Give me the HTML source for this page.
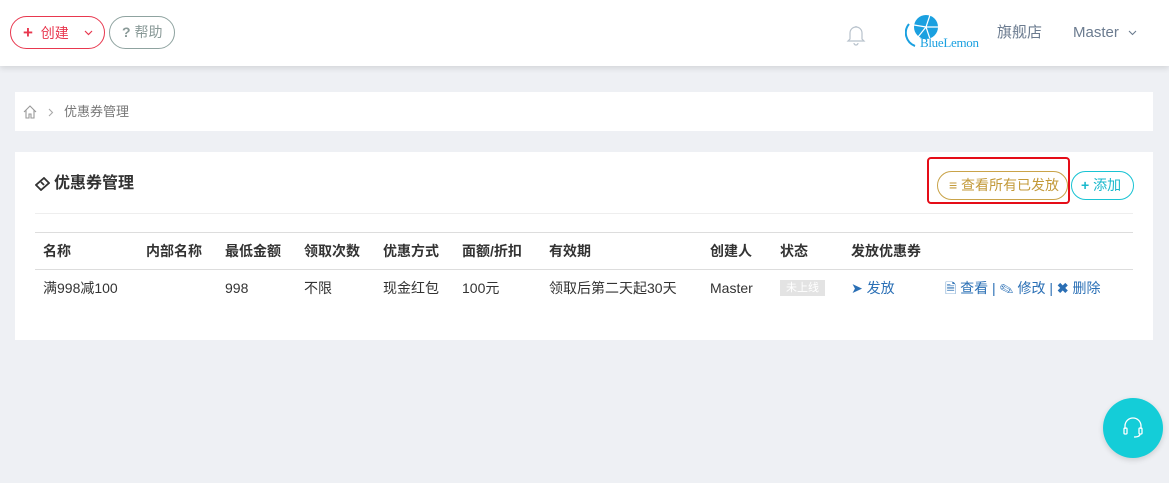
<!DOCTYPE html>
<html><head><meta charset="utf-8"><style>
*{margin:0;padding:0;box-sizing:border-box}
body{width:1169px;height:483px;background:#eef0f4;font-family:"Liberation Sans","Noto Sans CJK SC",sans-serif;font-size:14px;color:#333;position:relative;overflow:hidden}
.hdr{position:absolute;left:0;top:0;width:1169px;height:66px;background:#fff;box-shadow:0 2px 6px rgba(0,0,0,.12)}
.btn{position:absolute;border-radius:17px;height:33px;line-height:31px;font-size:14px}
.abs{position:absolute;white-space:nowrap;line-height:20px}
.box{position:absolute;left:15px;width:1138px;background:#fff}
.blue{color:#2a6fb5}
</style></head><body>
<div class="hdr">
 <div class="btn" style="left:10px;top:16px;width:95px;border:1px solid #e8384f;color:#e8384f;padding-left:12px"><b style="font-size:17px">+</b>&nbsp; 创建
  <svg style="position:absolute;left:73px;top:13px" width="9" height="6" viewBox="0 0 9 6" fill="none" stroke="#e8384f" stroke-width="1.2"><path d="M1 1l3.5 3.5L8 1"/></svg></div>
 <div class="btn" style="left:109px;top:16px;width:66px;border:1px solid #8fa3a0;color:#8a9a98;padding-left:12px"><b>?</b> 帮助</div>
 <svg class="abs" style="left:846px;top:24px" width="20" height="22" viewBox="0 0 20 22" fill="none" stroke="#b8c2cc" stroke-width="1.2"><path d="M4 15V9a6 6 0 0112 0v6l2 2H2z"/><path d="M8 19a2 2 0 004 0"/><path d="M10 2v1"/></svg>
 <svg class="abs" style="left:905px;top:14px" width="40" height="36" viewBox="0 0 40 36"><path d="M4 10A14 14 0 0010 32" fill="none" stroke="#1aa0e0" stroke-width="2"/><circle cx="21" cy="13" r="12" fill="#1aa0e0"/><path d="M21 13L9 11M21 13L13 23M21 13L25 1M21 13h12M21 13l4 12" stroke="#fff" stroke-width="1.2"/></svg>
 <div class="abs" style="left:920px;top:33px;font-family:'Liberation Serif',serif;font-size:13px;color:#1aa0e0;letter-spacing:-0.3px">BlueLemon</div>
 <div class="abs" style="left:997px;top:23px;font-size:15px;color:#6b7b8f">旗舰店</div>
 <div class="abs" style="left:1073px;top:23px;font-size:15px;color:#6b7b8f">Master</div>
 <svg class="abs" style="left:1128px;top:30px" width="9" height="6" viewBox="0 0 9 6" fill="none" stroke="#6b7b8f" stroke-width="1.1"><path d="M1 1l3.5 3.5L8 1"/></svg>
</div>
<div class="box" style="top:92px;height:39px">
 <svg class="abs" style="left:8px;top:13px" width="14" height="14" viewBox="0 0 14 14" fill="none" stroke="#999" stroke-width="1.1"><path d="M1 7L7 1l6 6M3 5v8h3V9h2v4h3V5"/></svg>
 <svg class="abs" style="left:33px;top:16px" width="6" height="9" viewBox="0 0 6 9" fill="none" stroke="#aaa" stroke-width="1.1"><path d="M1 1l3.5 3.5L1 8"/></svg>
 <div class="abs" style="left:49px;top:10px;color:#777;font-size:13px">优惠券管理</div>
</div>
<div class="box" style="top:152px;height:188px">
 <svg class="abs" style="left:20px;top:25px" width="15" height="14" viewBox="0 0 15 14" fill="none" stroke="#333" stroke-width="1.8"><path d="M9 1l5 5-8 7-5-5z"/><path d="M6 5l3 3"/></svg>
 <div class="abs" style="left:39px;top:22px;font-size:16px;font-weight:bold;color:#333">优惠券管理</div>
 <div class="abs" style="left:912px;top:5px;width:143px;height:47px;border:2px solid #e50d18;border-radius:4px"></div>
 <div class="abs" style="left:922px;top:19px;width:131px;height:29px;border:1px solid #c9a349;border-radius:15px;color:#c39a3a;font-size:14px;line-height:27px;padding-left:11px">&#8801; 查看所有已发放</div>
 <div class="abs" style="left:1056px;top:19px;width:63px;height:29px;border:1px solid #19c3d3;border-radius:15px;color:#19b8cc;font-size:14px;line-height:27px;padding-left:9px"><b>+</b> 添加</div>
 <div class="abs" style="left:20px;top:61px;width:1098px;border-top:1px solid #eee"></div>
 <div class="abs" style="left:20px;top:80px;width:1098px;border-top:1px solid #ddd"></div>
 <div class="abs" style="left:20px;top:117px;width:1098px;border-top:1px solid #ddd"></div>
 <div style="position:absolute;top:89px;left:0;font-weight:bold;font-size:14px">
  <span class="abs" style="left:28px">名称</span><span class="abs" style="left:131px">内部名称</span><span class="abs" style="left:210px">最低金额</span><span class="abs" style="left:289px">领取次数</span><span class="abs" style="left:368px">优惠方式</span><span class="abs" style="left:447px">面额/折扣</span><span class="abs" style="left:534px">有效期</span><span class="abs" style="left:695px">创建人</span><span class="abs" style="left:765px">状态</span><span class="abs" style="left:836px">发放优惠券</span>
 </div>
 <div style="position:absolute;top:126px;left:0;font-size:14px">
  <span class="abs" style="left:28px;top:0">满998减100</span><span class="abs" style="left:210px;top:0">998</span><span class="abs" style="left:289px;top:0">不限</span><span class="abs" style="left:368px;top:0">现金红包</span><span class="abs" style="left:447px;top:0">100元</span><span class="abs" style="left:534px;top:0">领取后第二天起30天</span><span class="abs" style="left:695px;top:0">Master</span>
  <span class="abs" style="left:765px;top:2px;background:#e3e3e3;color:#fff;font-size:11px;line-height:16px;padding:0 6px">未上线</span>
  <span class="abs blue" style="left:836px;top:0">&#10148; 发放</span>
  <span class="abs blue" style="left:930px;top:0">&#128462; 查看 | &#9998; 修改 | <b>&#10006;</b> 删除</span>
 </div>
</div>
<div class="abs" style="left:1103px;top:398px;width:60px;height:60px;border-radius:50%;background:#14cdd8;box-shadow:0 2px 6px rgba(0,0,0,.15)">
 <svg style="position:absolute;left:19px;top:18px" width="22" height="24" viewBox="0 0 22 24" fill="none" stroke="#fff" stroke-width="1.3"><path d="M3 13V10a8 8 0 0116 0v3"/><rect x="2" y="12" width="3" height="6" rx="1"/><rect x="17" y="12" width="3" height="6" rx="1"/><path d="M18 18q0 3-6 3"/></svg>
</div>
</body></html>
